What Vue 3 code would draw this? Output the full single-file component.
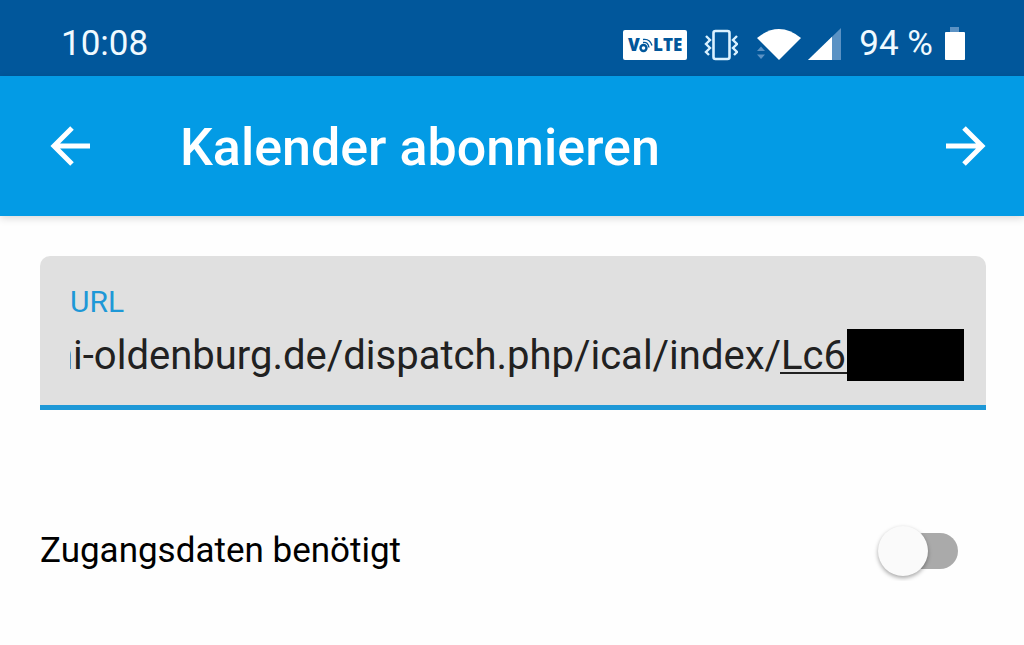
<script setup>
import { ref } from 'vue'

const url = ref('ni-oldenburg.de/dispatch.php/ical/index/Lc6')
const needsLogin = ref(false)
</script>

<template>
  <div class="screen">
    <div class="status">
      <time class="clock">10:08</time>
      <div class="indicators">
        <svg width="64" height="32" viewBox="0 0 64 32" aria-hidden="true">
          <rect x="0" y="1" width="64" height="30" rx="2" fill="#fff" />
          <g fill="#01579b" font-family="'Open Sans', sans-serif" font-weight="800" font-size="17">
            <text x="5" y="22">V</text>
            <text x="30" y="22">LTE</text>
          </g>
          <g fill="none" stroke="#01579b">
            <circle cx="20.5" cy="19" r="3" stroke-width="2.4" />
            <path d="M20 13.5q5-1 6 5M20 10.5q7-1 9 6" stroke-width="1.4" />
          </g>
        </svg>
        <svg class="vibrate" width="34" height="32" viewBox="0 0 34 32" fill="none" stroke="#d9f1ff" aria-hidden="true">
          <rect x="9.5" y="2" width="16" height="28" rx="2" stroke-width="2.6" />
          <path d="M2 7l4 4-4 4 4 4-4 4 3 3M33 7l-4 4 4 4-4 4 4 4-3 3" stroke-width="2.4" />
        </svg>
        <svg class="wifi" width="46" height="34" viewBox="0 0 46 34" aria-hidden="true">
          <path d="M1 11Q23-7 45 11L23 33Z" fill="#fff" />
          <path d="M1 24L5 19.5L9 24ZM1 27.5H9L5 32Z" fill="#5b92c4" />
        </svg>
        <svg class="signal" width="33" height="34" viewBox="0 0 33 34" aria-hidden="true">
          <path d="M33 1V33H0Z" fill="#5b92c4" />
          <path d="M24 9.7V33H0Z" fill="#fff" />
        </svg>
        <span class="percent">94 %</span>
        <svg class="battery" width="20" height="34" viewBox="0 0 20 34" aria-hidden="true">
          <path d="M5 0H14V5H5Z" fill="#5b92c4" />
          <rect x="0" y="5" width="20" height="28" rx="1" fill="#fff" />
        </svg>
      </div>
    </div>

    <header class="bar">
      <button class="nav" type="button" aria-label="Zurück">
        <svg width="40" height="40" viewBox="0 0 40 40" fill="none" stroke="#fff" stroke-width="5" aria-hidden="true">
          <path d="M40 20H4M22 2L4 20L22 38" />
        </svg>
      </button>
      <h1>Kalender abonnieren</h1>
      <button class="nav" type="button" aria-label="Weiter">
        <svg width="40" height="40" viewBox="0 0 40 40" fill="none" stroke="#fff" stroke-width="5" aria-hidden="true">
          <path d="M0 20H36M18 2L36 20L18 38" />
        </svg>
      </button>
    </header>

    <main>
      <div class="field">
        <label for="url">URL</label>
        <input id="url" v-model="url" type="text" spellcheck="false" />
        <div class="composing"><span class="redacted"></span></div>
      </div>
      <div class="option">
        <label for="login">Zugangsdaten benötigt</label>
        <input id="login" v-model="needsLogin" class="switch" type="checkbox" role="switch" />
      </div>
    </main>
  </div>
</template>

<style>
body {
  background: #fefefe;
}
</style>

<style scoped>
.screen {
  font-family: Roboto, sans-serif;
  color: #000;
}

.status {
  display: flex;
  align-items: center;
  justify-content: space-between;
  height: 76px;
  padding: 14px 59px 0 61px;
  box-sizing: border-box;
  background: #01579b;
  color: #f0faff;
  font-size: 35px;
  line-height: 44px;
}

.clock,
.percent {
  margin-bottom: 2px;
}

.indicators {
  display: flex;
  align-items: flex-end;
}

.indicators svg {
  display: block;
  margin-bottom: 7px;
}

.vibrate {
  margin-left: 17px;
}

.wifi {
  margin-left: 18px;
}

.signal {
  margin-left: 6px;
}

.percent {
  margin-left: 18px;
}

.battery {
  margin-left: 12px;
}

.bar {
  display: flex;
  align-items: center;
  height: 140px;
  padding: 0 38px 0 50px;
  box-sizing: border-box;
  background: #039be5;
  box-shadow: 0 2px 8px rgba(0, 0, 0, 0.16);
}

.bar h1 {
  flex: 1;
  margin: 4px 0 0 90px;
  color: #fff;
  font-size: 52px;
  font-weight: 500;
  line-height: 60px;
}

.nav {
  padding: 0;
  border: 0;
  background: none;
}

.nav svg {
  display: block;
}

main {
  padding: 40px 38px 0 40px;
}

.field {
  position: relative;
  padding: 28px 22px 23px 30px;
  border-bottom: 5px solid #1e98d7;
  border-radius: 10px 10px 0 0;
  background: #e0e0e0;
}

.field label {
  display: block;
  color: #1e98d7;
  font-size: 30px;
  line-height: 36px;
}

.field input {
  display: block;
  width: 100%;
  height: 52px;
  margin-top: 10px;
  padding: 0;
  border: 0;
  outline: 0;
  background: none;
  color: #212121;
  font: 40px/52px Roboto, sans-serif;
  text-indent: -19px;
}

.composing {
  position: absolute;
  right: 22px;
  bottom: 24px;
  width: 184px;
  height: 52px;
  pointer-events: none;
  background: linear-gradient(#212121, #212121) 0 43px / 100% 2px no-repeat;
}

.redacted {
  display: block;
  width: 117px;
  height: 52px;
  margin-left: auto;
  background: #000;
}

.option {
  display: flex;
  align-items: center;
  justify-content: space-between;
  margin-top: 111px;
  padding-right: 28px;
  font-size: 35px;
  line-height: 60px;
}

.switch {
  position: relative;
  appearance: none;
  width: 72px;
  height: 36px;
  margin: 0;
  border-radius: 18px;
  background: #aaa;
}

.switch::before {
  content: "";
  position: absolute;
  top: -7px;
  left: -8px;
  width: 50px;
  height: 50px;
  border-radius: 50%;
  background: #fafafa;
  box-shadow: 0 2px 4px rgba(0, 0, 0, 0.35);
}

.switch:checked::before {
  left: 30px;
}
</style>
